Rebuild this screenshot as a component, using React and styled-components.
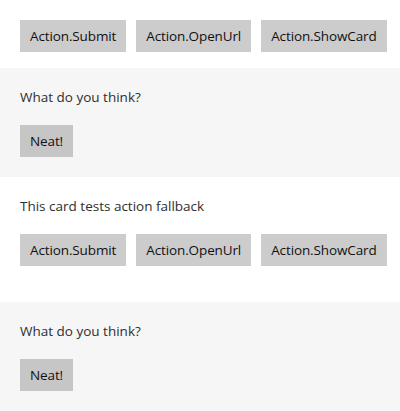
import React from "react";
import styled, { createGlobalStyle } from "styled-components";

const Global = createGlobalStyle`
  html, body { margin: 0; padding: 0; background: #ffffff; }
  body { font-family: "Segoe UI", "Open Sans", "Noto Sans", sans-serif; }
`;

const Page = styled.div`
  width: 400px;
  display: flex;
  flex-direction: column;
`;

const Card = styled.section`
  display: flex;
  flex-direction: column;
  padding: 20px 20px 0 20px;
`;

const Paragraph = styled.p`
  margin: 0;
  font-size: 13.5px;
  line-height: 19px;
  color: #2e2e2e;
`;

const ActionRow = styled.div`
  display: flex;
  gap: 10px;
  margin-top: ${(p) => p.$top || 0}px;
`;

const ActionButton = styled.button`
  height: 32px;
  padding: 0 10px;
  border: none;
  background: ${(p) => (p.$inPanel ? "#c6c6c6" : "#cccccc")};
  color: #111111;
  font-family: inherit;
  font-size: 13.5px;
  letter-spacing: -0.12px;
  line-height: 32px;
  cursor: pointer;
  white-space: nowrap;
`;

const ShowCardPanel = styled.div`
  margin: ${(p) => p.$top}px -20px 0 -20px;
  padding: 20px;
  background: #f6f6f6;
  display: flex;
  flex-direction: column;
  align-items: flex-start;
`;

const actions = ["Action.Submit", "Action.OpenUrl", "Action.ShowCard"];

function Actions({ top }) {
  return (
    <ActionRow $top={top}>
      {actions.map((a) => (
        <ActionButton key={a}>{a}</ActionButton>
      ))}
    </ActionRow>
  );
}

function Panel({ top }) {
  return (
    <ShowCardPanel $top={top}>
      <Paragraph>What do you think?</Paragraph>
      <ActionRow $top={18}>
        <ActionButton $inPanel>Neat!</ActionButton>
      </ActionRow>
    </ShowCardPanel>
  );
}

export default function App() {
  return (
    <Page>
      <Global />
      <Card>
        <Actions top={0} />
        <Panel top={16} />
      </Card>
      <Card>
        <Paragraph>This card tests action fallback</Paragraph>
        <Actions top={18} />
        <Panel top={36} />
      </Card>
    </Page>
  );
}
